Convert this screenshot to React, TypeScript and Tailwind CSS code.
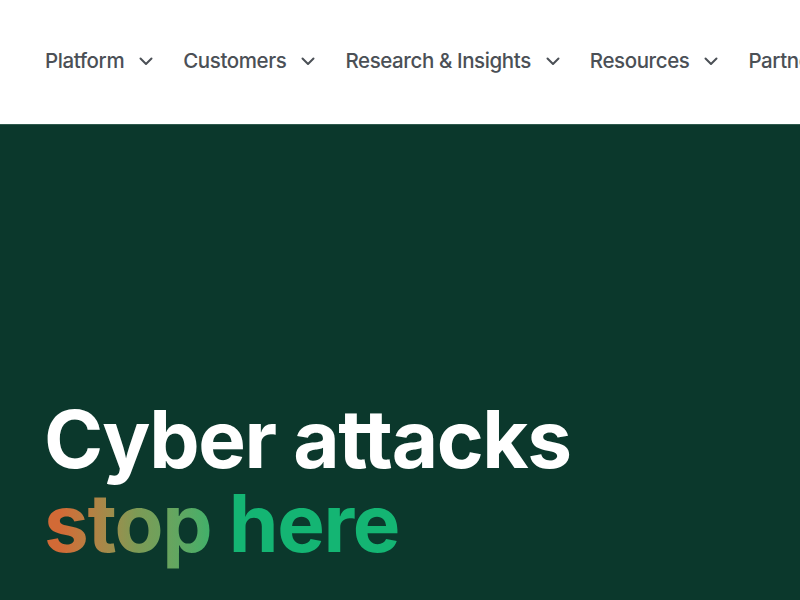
import React from "react";

function Chevron() {
  return (
    <svg width="14" height="9" viewBox="0 0 14 9" fill="none" className="shrink-0">
      <path d="M1.5 1.5 L7 7 L12.5 1.5" stroke="#4b5056" strokeWidth="2" strokeLinecap="round" strokeLinejoin="round" />
    </svg>
  );
}

const items = ["Platform", "Customers", "Research & Insights", "Resources", "Partners"];

export default function App() {
  return (
    <div className="w-[800px] h-[600px] overflow-hidden bg-white" style={{ fontFamily: "Inter, 'Noto Sans', sans-serif" }}>
      <header className="h-[124px] bg-white flex items-center pl-[45px] whitespace-nowrap">
        <nav className="flex items-center gap-[30px] pb-[2px]">
          {items.map((t) => (
            <div key={t} className="flex items-center gap-[15px]">
              <span className="text-[20.5px] font-medium text-[#4b5056] tracking-[-0.4px]">{t}</span>
              <Chevron />
            </div>
          ))}
        </nav>
      </header>
      <section className="h-[476px] bg-[#0b382c] pl-[44px] pt-[272px] border-t border-[#2e5a4d]">
        <h1 className="text-[80px] font-bold leading-[84px] tracking-[-1.4px] text-white whitespace-nowrap">
          <div>Cyber attacks</div>
          <div>
            <span className="bg-gradient-to-r from-[#d26a36] from-10% via-[#7d9a55] via-55% to-[#3fb06a] bg-clip-text text-transparent">stop</span>{" "}
            <span className="text-[#14b573]">here</span>
          </div>
        </h1>
      </section>
    </div>
  );
}
